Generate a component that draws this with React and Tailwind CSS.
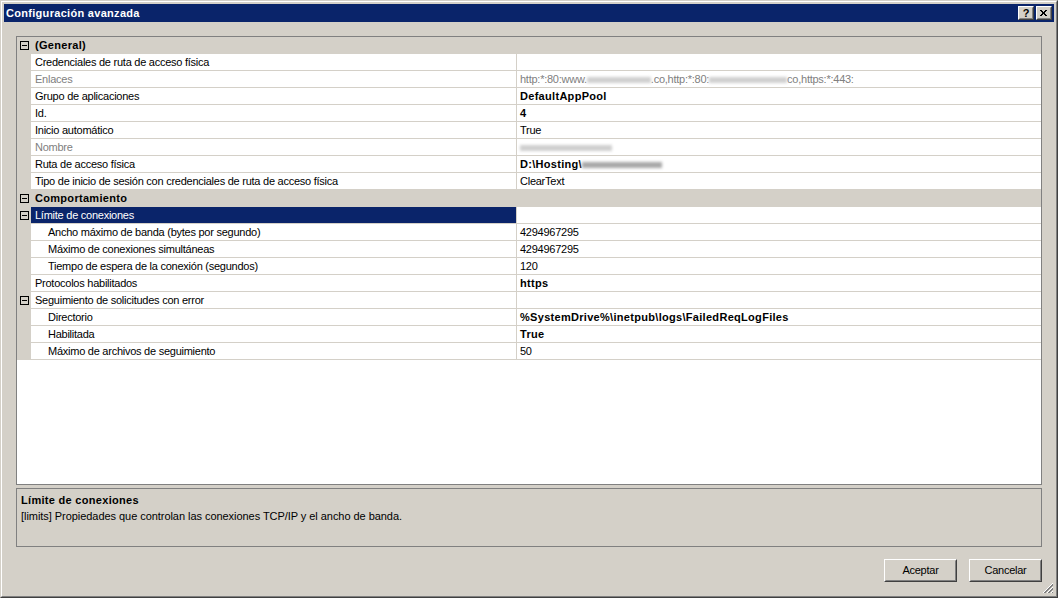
const rows = [
  { cat: true, label: "(General)" },
  { label: "Credenciales de ruta de acceso física", value: "" },
  { label: "Enlaces", gray: true, value: "enlaces" },
  { label: "Grupo de aplicaciones", value: "DefaultAppPool", bold: true },
  { label: "Id.", value: "4", bold: true },
  { label: "Inicio automático", value: "True" },
  { label: "Nombre", gray: true, value: "nombre" },
  { label: "Ruta de acceso física", value: "ruta", bold: true },
  { label: "Tipo de inicio de sesión con credenciales de ruta de acceso física", value: "ClearText" },
  { cat: true, label: "Comportamiento" },
  { label: "Límite de conexiones", expander: true, selected: true, value: "" },
  { label: "Ancho máximo de banda (bytes por segundo)", value: "4294967295", indent: true },
  { label: "Máximo de conexiones simultáneas", value: "4294967295", indent: true },
  { label: "Tiempo de espera de la conexión (segundos)", value: "120", indent: true },
  { label: "Protocolos habilitados", value: "https", bold: true },
  { label: "Seguimiento de solicitudes con error", expander: true, value: "" },
  { label: "Directorio", value: "%SystemDrive%\\inetpub\\logs\\FailedReqLogFiles", bold: true, indent: true },
  { label: "Habilitada", value: "True", bold: true, indent: true },
  { label: "Máximo de archivos de seguimiento", value: "50", indent: true },
];

function Blur({ w, color }) {
  return <span className={`inline-block h-[6px] align-middle blur-[1.5px] ${color}`} style={{ width: w }} />;
}

function Minus() {
  return (
    <div className="w-[9px] h-[9px] border border-[#000] flex items-center justify-center">
      <div className="w-[5px] h-px bg-[#000]" />
    </div>
  );
}

function Value({ row }) {
  if (row.value === "enlaces") {
    return (
      <span className="text-[#808080]">
        http:*:80:www.<Blur w={64} color="bg-[#d0d0d0]" />.co,http:*:80:<Blur w={78} color="bg-[#d0d0d0]" />co,https:*:443:
      </span>
    );
  }
  if (row.value === "nombre") return <Blur w={92} color="bg-[#cfcfcf]" />;
  if (row.value === "ruta") {
    return (
      <span className="font-bold tracking-[0.3px]">
        D:\Hosting\<Blur w={80} color="bg-[#a8a8a8]" />
      </span>
    );
  }
  return <span className={row.bold ? "font-bold tracking-[0.3px]" : ""}>{row.value}</span>;
}

function Row({ row }) {
  if (row.cat) {
    return (
      <div className="flex h-[17px] bg-[#d4d0c8]">
        <div className="w-[14px] flex items-center justify-center pl-px">
          <Minus />
        </div>
        <div className="pl-[4px] leading-[17px] font-bold tracking-[0.3px]">{row.label}</div>
      </div>
    );
  }
  return (
    <div className="flex h-[17px]">
      <div className="w-[14px] bg-[#d4d0c8] flex items-center justify-center pl-px">
        {row.expander && <Minus />}
      </div>
      <div
        className={`w-[486px] border-r border-b border-[#d4d0c8] leading-[16px] whitespace-nowrap overflow-hidden ${
          row.indent ? "pl-[17px]" : "pl-[4px]"
        } ${row.selected ? "bg-[#0a246a] text-white" : row.gray ? "text-[#808080]" : ""}`}
      >
        {row.label}
      </div>
      <div className="flex-1 border-b border-[#d4d0c8] leading-[16px] pl-[3px] whitespace-nowrap overflow-hidden">
        <Value row={row} />
      </div>
    </div>
  );
}

function Btn({ children }) {
  return (
    <div className="w-[73px] h-[23px] border border-t-white border-l-white border-r-[#404040] border-b-[#404040]">
      <div className="h-full border border-t-[#d4d0c8] border-l-[#d4d0c8] border-r-[#808080] border-b-[#808080] flex items-center justify-center">
        {children}
      </div>
    </div>
  );
}

function CapBtn({ children }) {
  return (
    <div className="w-[16px] h-[14px] bg-[#d4d0c8] border border-t-white border-l-white border-r-[#404040] border-b-[#404040]">
      <div className="h-full border border-t-[#d4d0c8] border-l-[#d4d0c8] border-r-[#808080] border-b-[#808080] flex items-center justify-center text-black font-bold leading-none">
        {children}
      </div>
    </div>
  );
}

export default function App() {
  return (
    <div className="w-[1058px] h-[598px] bg-[#d4d0c8] border border-t-[#d4d0c8] border-l-[#d4d0c8] border-r-[#404040] border-b-[#404040] font-['Liberation_Sans',sans-serif] text-[11px] tracking-[-0.25px] text-black">
      <div className="h-full border border-t-white border-l-white border-r-[#808080] border-b-[#808080] p-[2px] flex flex-col">
        <div className="h-[18px] bg-[#0a246a] flex items-center pl-[2px] pr-[2px]">
          <div className="flex-1 text-white font-bold text-[11px] tracking-[0.3px]">Configuración avanzada</div>
          <div className="flex gap-[2px]">
            <CapBtn>?</CapBtn>
            <CapBtn>
              <svg width="8" height="7" viewBox="0 0 8 7">
                <path d="M0 0 L6 6 M1 0 L7 6 M6 0 L0 6 M7 0 L1 6" stroke="#000" strokeWidth="1" />
              </svg>
            </CapBtn>
          </div>
        </div>
        <div className="flex-1 flex flex-col pl-[12px] pt-[14px] relative">
          <div className="w-[1026px] h-[449px] bg-white border border-[#808080]">
            {rows.map((r, i) => (
              <Row key={i} row={r} />
            ))}
          </div>
          <div className="w-[1026px] h-[59px] mt-[3px] border border-[#808080] pl-[4px] pt-[3px]">
            <div className="font-bold leading-[16px] tracking-[0.3px]">Límite de conexiones</div>
            <div className="leading-[16px] tracking-[-0.05px]">[limits] Propiedades que controlan las conexiones TCP/IP y el ancho de banda.</div>
          </div>
          <div className="w-[1026px] flex justify-end gap-[12px] mt-[12px]">
            <Btn>Aceptar</Btn>
            <Btn>Cancelar</Btn>
          </div>
          <svg className="absolute right-0 bottom-0" width="12" height="12" viewBox="0 0 12 12">
            <path d="M11 1 L1 11 M11 5 L5 11 M11 9 L9 11" stroke="#fff" strokeWidth="1" />
            <path d="M11 2 L2 11 M11 3 L3 11 M11 6 L6 11 M11 7 L7 11 M11 10 L10 11" stroke="#808080" strokeWidth="1" />
          </svg>
        </div>
      </div>
    </div>
  );
}
